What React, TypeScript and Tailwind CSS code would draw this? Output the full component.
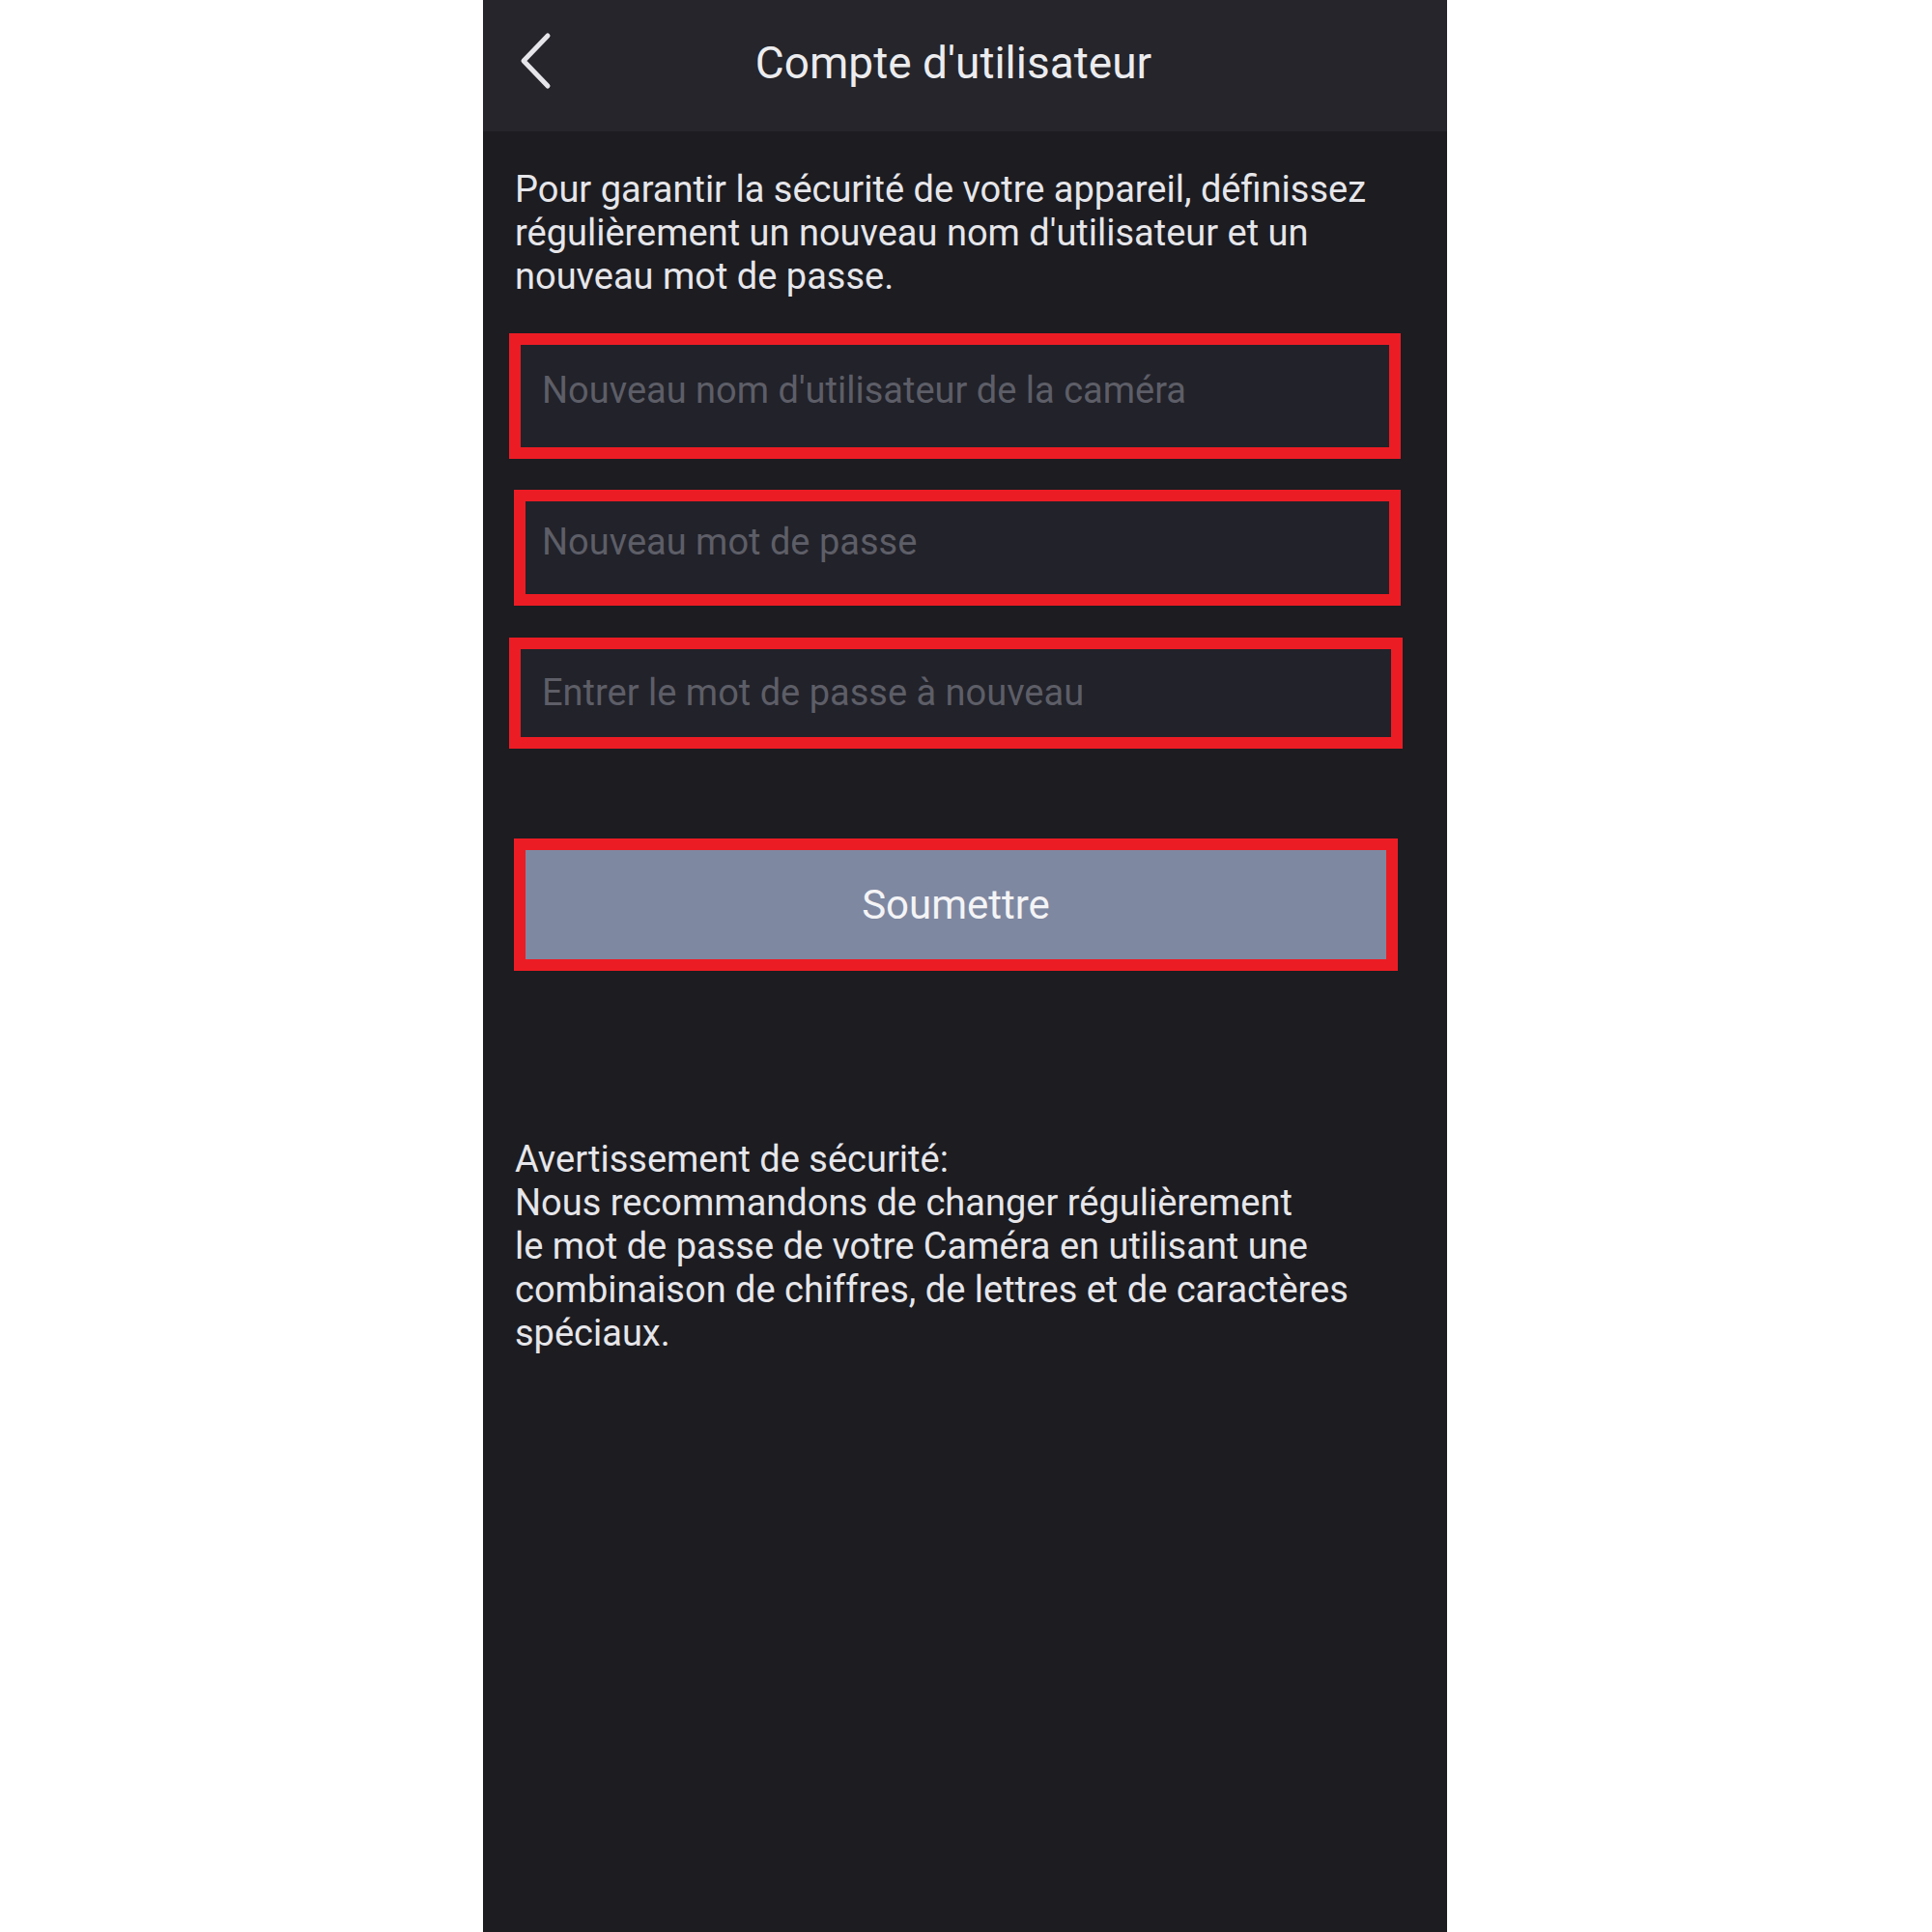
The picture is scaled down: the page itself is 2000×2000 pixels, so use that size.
import React from "react";

const fieldClass =
  "flex items-center border-[12px] border-[#ec1c24] bg-[#22222a] text-[38px] text-[#5d5e67]";

function BackIcon() {
  return (
    <svg width="34" height="60" viewBox="0 0 34 60" fill="none">
      <path
        d="M29 4 L4 30 L29 56"
        stroke="#e6e6ea"
        strokeWidth="5"
        strokeLinecap="round"
        strokeLinejoin="round"
      />
    </svg>
  );
}

export default function App() {
  return (
    <div className="flex min-h-[2000px] w-full bg-white pl-[500px] font-['Roboto',sans-serif]">
      <div className="flex min-h-[2000px] w-[998px] flex-col bg-[#1c1c21]">
        {/* top bar */}
        <div className="flex h-[136px] items-center bg-[#25252b] pb-[10px]">
          <div className="flex w-[100px] pl-[38px]">
            <BackIcon />
          </div>
          <h1 className="flex-1 pt-[4px] text-center text-[46px] text-[#ececef]">Compte d'utilisateur</h1>
          <div className="w-[124px]" />
        </div>

        <p className="whitespace-nowrap px-[33px] pt-[38px] text-[38px] leading-[45px] text-[#e6e6ea]">
          Pour garantir la sécurité de votre appareil, définissez
          <br />
          régulièrement un nouveau nom d'utilisateur et un
          <br />
          nouveau mot de passe.
        </p>

        <div className={`${fieldClass} ml-[27px] mt-[36px] h-[130px] w-[923px] pb-[12px] pl-[22px]`}>
          Nouveau nom d'utilisateur de la caméra
        </div>
        <div className={`${fieldClass} ml-[32px] mt-[32px] h-[120px] w-[918px] pb-[12px] pl-[17px]`}>
          Nouveau mot de passe
        </div>
        <div className={`${fieldClass} ml-[27px] mt-[33px] h-[115px] w-[925px] pl-[22px]`}>
          Entrer le mot de passe à nouveau
        </div>

        <button className="ml-[32px] mt-[93px] flex h-[137px] w-[915px] items-center justify-center border-[12px] border-[#ec1c24] bg-[#7f88a1] text-[42px] text-[#f4f4f6]">
          Soumettre
        </button>

        <div className="mt-[173px] whitespace-nowrap px-[33px] text-[38px] leading-[45px] text-[#e6e6ea]">
          <p>Avertissement de sécurité:</p>
          <p>
            Nous recommandons de changer régulièrement
            <br />
            le mot de passe de votre Caméra en utilisant une
            <br />
            combinaison de chiffres, de lettres et de caractères
            <br />
            spéciaux.
          </p>
        </div>
      </div>
    </div>
  );
}
